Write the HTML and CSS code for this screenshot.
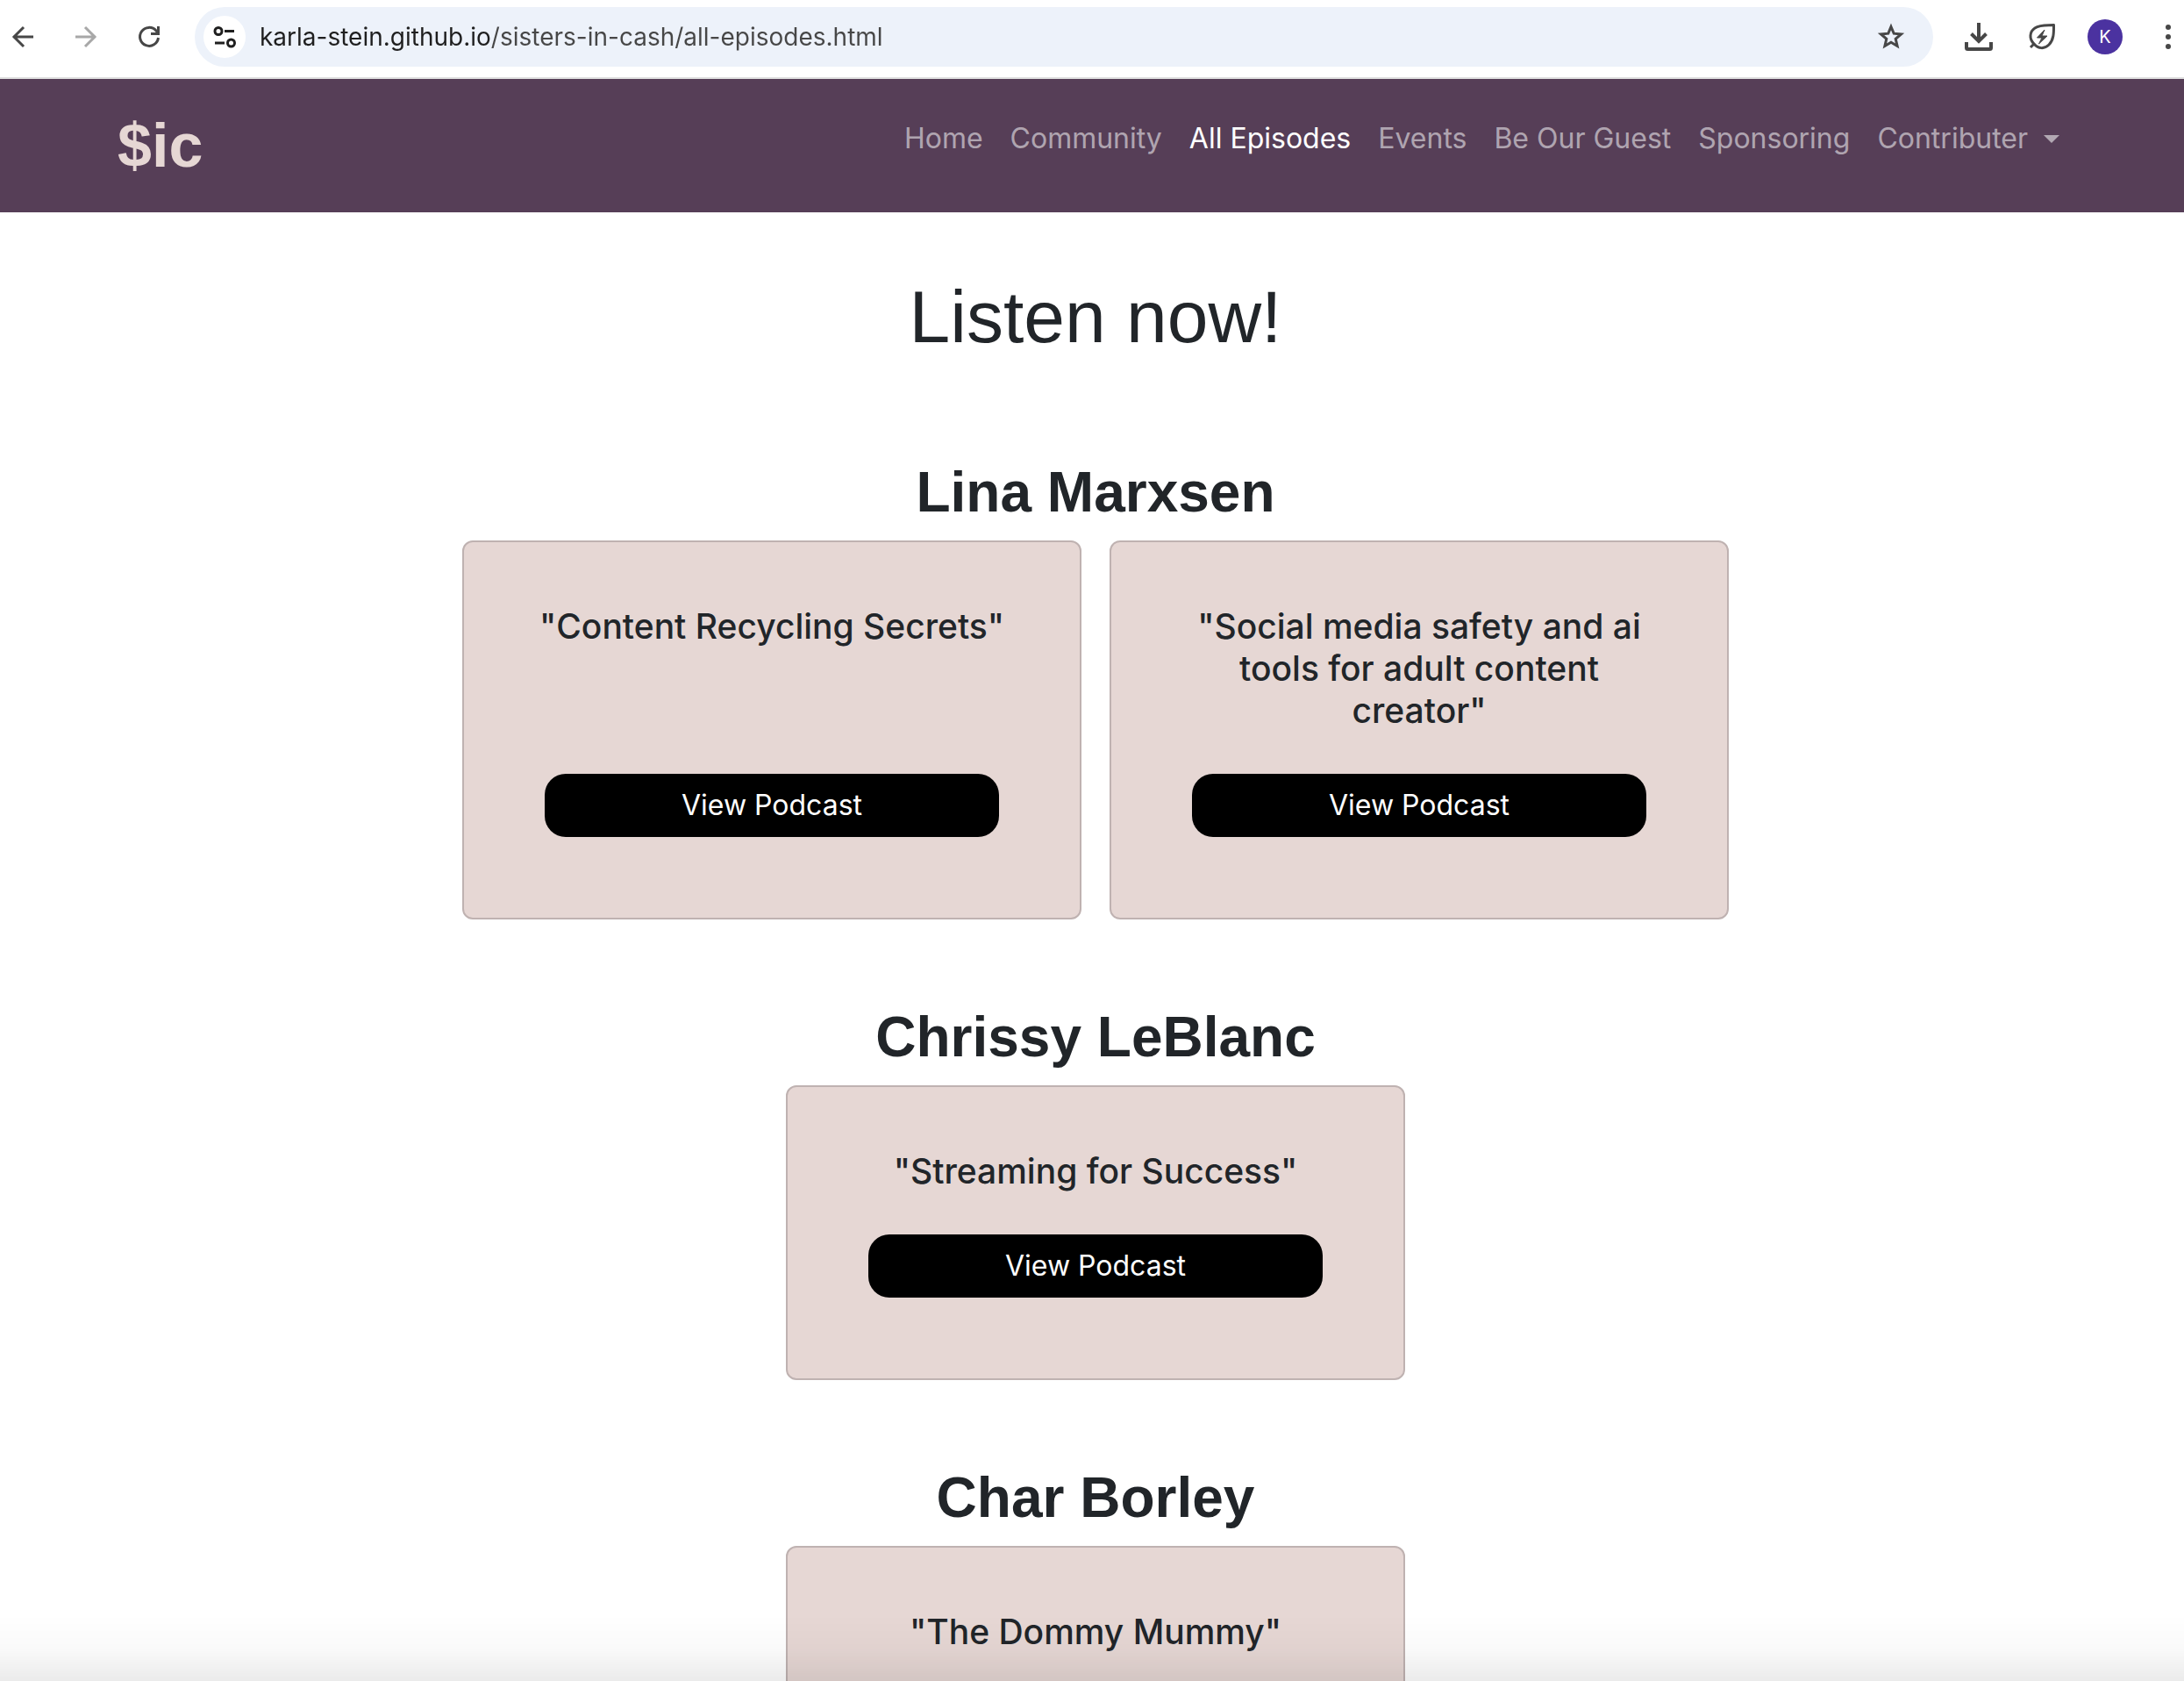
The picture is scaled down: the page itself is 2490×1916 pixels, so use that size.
FILE: index.html
```html
<!DOCTYPE html>
<html lang="en">
<head>
<meta charset="utf-8">
<title>Sisters in Cash – All Episodes</title>
<link rel="stylesheet" href="styles.css">
</head>
<body>
<div class="toolbar">
  <div class="tool-group">
    <button class="tool" type="button" aria-label="Back">
      <svg width="48" height="48" viewBox="0 0 48 48" fill="none" stroke="#474747" stroke-width="3"><path d="M36 24H13M25 13 14 24l11 11"/></svg>
    </button>
    <button class="tool" type="button" aria-label="Forward" disabled>
      <svg width="48" height="48" viewBox="0 0 48 48" fill="none" stroke="#a8a8a8" stroke-width="3"><path d="M12 24h23M23 13l11 11-11 11"/></svg>
    </button>
    <button class="tool" type="button" aria-label="Reload">
      <svg width="48" height="48" viewBox="0 0 48 48" fill="none" stroke="#474747" stroke-width="3"><path d="M34.500 25A10.500 10.500 0 1 1 32 17l2.500 3.500M34.500 12v8.500H26"/></svg>
    </button>
  </div>
  <div class="address">
    <button class="site-info" type="button" aria-label="View site information">
      <svg width="48" height="48" viewBox="0 0 48 48" fill="none" stroke="#1f1f1f" stroke-width="3"><circle cx="17" cy="17.500" r="4"/><path d="M24 17.500h11M13 31h11"/><circle cx="31.500" cy="31" r="4"/></svg>
    </button>
    <input class="url" type="text" aria-label="Address" value="karla-stein.github.io/sisters-in-cash/all-episodes.html">
    <button class="tool" type="button" aria-label="Bookmark">
      <svg width="48" height="48" viewBox="0 0 48 48" fill="none" stroke="#474747" stroke-width="3"><path d="M24 12.500l3.200 7.700 8.300.7-6.300 5.400 1.900 8.200-7.100-4.300-7.100 4.300 1.900-8.200-6.300-5.400 8.300-.7z"/></svg>
    </button>
  </div>
  <div class="tool-group">
    <button class="tool" type="button" aria-label="Downloads">
      <svg width="48" height="48" viewBox="0 0 48 48" fill="none" stroke="#474747" stroke-width="4"><path d="M24 8v20M15.500 20.500 24 29l8.500-8.500M10 30v6.500q0 1.500 1.500 1.500h25q1.500 0 1.500-1.500V30"/></svg>
    </button>
    <button class="tool" type="button" aria-label="Energy saver">
      <svg width="48" height="48" viewBox="0 0 48 48" fill="none" stroke="#474747" stroke-width="3" stroke-linejoin="round"><path d="M11 36l4-4C9 26 10 18 16 14c6-4 13-3 21.500-3.500C37.500 18 38 27 32 33c-5 5-12 5-17-1"/><path d="M27 16 18.500 25H24l-3.500 7L30 23h-6z" fill="#474747" stroke-width="1"/></svg>
    </button>
    <button class="tool" type="button" aria-label="Profile"><span class="avatar">K</span></button>
    <button class="tool more" type="button" aria-label="More">
      <svg width="36" height="48" viewBox="0 0 36 48" fill="#474747"><circle cx="18" cy="13" r="3"/><circle cx="18" cy="24" r="3"/><circle cx="18" cy="35" r="3"/></svg>
    </button>
  </div>
</div>

<div class="viewport">
  <header class="navbar">
    <a class="brand" href="#">$ic</a>
    <nav class="nav">
      <a href="#">Home</a>
      <a href="#">Community</a>
      <a class="active" href="#" aria-current="page">All Episodes</a>
      <a href="#">Events</a>
      <a href="#">Be Our Guest</a>
      <a href="#">Sponsoring</a>
      <a class="dropdown" href="#">Contributer</a>
    </nav>
  </header>

  <main class="episodes">
    <h1>Listen now!</h1>

    <section class="guest">
      <h2>Lina Marxsen</h2>
      <div class="cards">
        <article class="card">
          <h3>"Content Recycling Secrets"</h3>
          <a class="view" href="#">View Podcast</a>
        </article>
        <article class="card">
          <h3>"Social media safety and ai tools for adult content creator"</h3>
          <a class="view" href="#">View Podcast</a>
        </article>
      </div>
    </section>

    <section class="guest">
      <h2>Chrissy LeBlanc</h2>
      <div class="cards">
        <article class="card">
          <h3>"Streaming for Success"</h3>
          <a class="view" href="#">View Podcast</a>
        </article>
      </div>
    </section>

    <section class="guest">
      <h2>Char Borley</h2>
      <div class="cards">
        <article class="card">
          <h3>"The Dommy Mummy"</h3>
        </article>
      </div>
    </section>
  </main>
</div>
<div class="edge-shade"></div>
</body>
</html>
```
FILE: styles.css
```css
* { box-sizing: border-box; }

body {
  margin: 0;
  height: 100vh;
  display: flex;
  flex-direction: column;
  overflow: hidden;
  background: #fff;
  color: #212529;
  font: 400 32px/48px Inter, "Liberation Sans", sans-serif;
}

a { color: inherit; text-decoration: none; }

button {
  padding: 0;
  border: 0;
  background: none;
  font: inherit;
}

svg { display: block; }

/* Browser toolbar */
.toolbar {
  display: flex;
  align-items: center;
  gap: 28px;
  padding: 8px 0 12px 2px;
  border-bottom: 2px solid #dfdfdf;
}

.tool-group {
  display: flex;
  align-items: center;
  gap: 24px;
}

.tool {
  display: flex;
  align-items: center;
  justify-content: center;
  width: 48px;
  height: 48px;
  flex: none;
}

.more { width: 36px; margin-left: 6px; }

.address {
  flex: 1;
  display: flex;
  align-items: center;
  gap: 16px;
  height: 68px;
  padding: 0 24px 0 10px;
  border-radius: 34px;
  background: #edf2fa;
}

.site-info {
  flex: none;
  border-radius: 50%;
  background: #fff;
}

/* The host part is darker than the path */
.url {
  flex: 1;
  min-width: 0;
  height: 48px;
  padding: 0;
  border: 0;
  outline: 0;
  color: #474747;
  font: 400 28px/48px Inter, "Liberation Sans", sans-serif;
  background: linear-gradient(to right, #1f1f1f 264px, #474747 264px);
  -webkit-background-clip: text;
  background-clip: text;
  -webkit-text-fill-color: transparent;
}

.avatar {
  width: 40px;
  height: 40px;
  border-radius: 50%;
  background: #4b32a0;
  color: #fff;
  font-size: 20px;
  line-height: 40px;
  text-align: center;
}

/* Page */
.viewport {
  flex: 1;
  min-height: 0;
  overflow-y: auto;
  scrollbar-width: none;
}

.navbar {
  display: flex;
  justify-content: space-between;
  align-items: flex-start;
  padding: 34px 142px 34px 134px;
  background: #563e57;
}

.brand {
  color: #e6d7d4;
  font: 700 70px/84px "Liberation Sans", sans-serif;
}

.nav {
  display: flex;
  gap: 31px;
  padding-top: 10px;
  color: rgba(255, 255, 255, 0.55);
}

.nav .active { color: #fff; }

.dropdown {
  display: flex;
  align-items: center;
  gap: 18px;
}

.dropdown::after {
  content: "";
  border: 9px solid transparent;
  border-top-color: currentColor;
  border-bottom: 0;
}

.episodes {
  padding: 71px 0 0 8px;
  text-align: center;
}

h1, h2, h3 { margin: 0; }

h1 {
  margin-bottom: 114px;
  font: 400 84px/96px "Liberation Sans", sans-serif;
}

.guest {
  max-width: 1444px;
  margin: 0 auto 96px;
}

h2 {
  margin-bottom: 16px;
  font: 700 64px/77px "Liberation Sans", sans-serif;
}

.cards {
  display: flex;
  justify-content: center;
  gap: 32px;
}

.card {
  display: flex;
  flex-direction: column;
  justify-content: space-between;
  gap: 48px;
  width: calc(50% - 16px);
  padding: 72px 76px 92px;
  border: 2px solid #bfb2b1;
  border-radius: 12px;
  background: #e6d7d4;
}

h3 {
  font-size: 39px;
  line-height: 48px;
  font-weight: 500;
}

.view {
  margin: 0 16px;
  padding: 12px;
  border-radius: 24px;
  background: #000;
  color: #fff;
}

/* Soft shade along the lower edge of the window */
.edge-shade {
  position: fixed;
  inset: auto 0 0;
  height: 76px;
  background: linear-gradient(to bottom, transparent, rgba(0, 0, 0, 0.02) 50%, rgba(0, 0, 0, 0.08));
  pointer-events: none;
}
```
